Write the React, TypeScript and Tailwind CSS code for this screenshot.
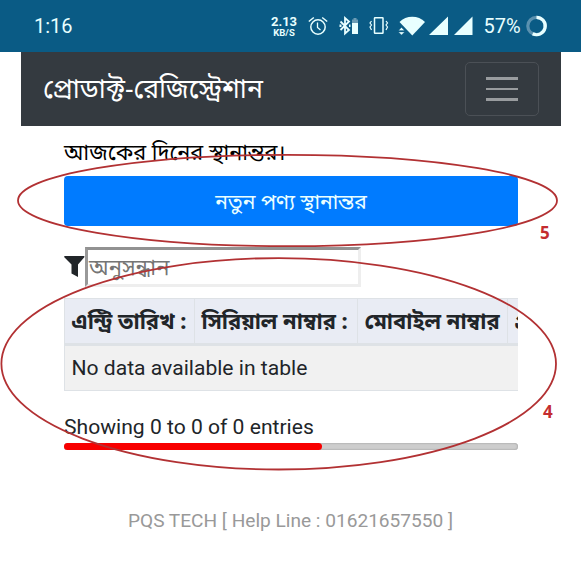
import React from "react";

const latin = "font-[Roboto,'Noto_Sans',sans-serif]";
const bangla = "font-['Noto_Sans_Bengali','Noto_Sans',Roboto,sans-serif]";

function StatusBar() {
  return (
    <header className="relative h-[52px] w-full shrink-0 bg-[#0a5b85] text-[#e8ffff]">
      <div className="flex h-full items-center pl-[34px]">
        <span className="w-[237px] text-[20px] leading-none">1:16</span>
        <div className="flex w-[26px] flex-col items-center font-bold leading-none">
          <span className="text-[13px] leading-[13px]">2.13</span>
          <span className="text-[9.5px] leading-[10px]">KB/S</span>
        </div>
        <svg width="284" height="52" viewBox="297 0 284 52" className="shrink-0" fill="none" stroke="#e8ffff">
          <circle cx="318" cy="27" r="7.2" strokeWidth="1.5" />
          <path d="M317.500 22.500v5l3 2.500" strokeWidth="1.300" />
          <path d="M308.800 21.500l5-4M327.200 21.500l-5-4" strokeWidth="1.500" />
          <path d="M340.500 21.500l8.500 8.500-4 3.500V18l4 3.500-8.500 8.500" strokeWidth="1.800" />
          <path d="M339.500 24.500h2v2.500h-2zM349 24.500h1.500v2.500H349z" fill="#e8ffff" stroke="none" />
          <path d="M352 19.500h1.500v-1.500h3v1.500h1.500V23h-6z" fill="#6b9cb5" stroke="none" />
          <path d="M352 23h6v11h-6z" fill="#e8ffff" stroke="none" />
          <rect x="374.500" y="17.700" width="8.500" height="15.600" rx=".5" strokeWidth="1.500" />
          <path d="M371.500 21l-1.500 2 1.500 2-1.500 2 1.500 3M386 21l1.500 2-1.500 2 1.500 2-1.500 3" strokeWidth="1.200" />
          <path d="M399.500 22C406 15 418.500 15 425 22L412.300 35.500z" fill="#e8ffff" stroke="none" />
          <path d="M398.500 30.500l3-3 3 3zM398.500 32l3 3 3-3z" fill="#e8ffff" stroke="#0a5b85" strokeWidth=".3" />
          <path d="M429 35L448 16.500V35zM454 35l18.500-18.500V35z" fill="#e8ffff" stroke="none" />
          <circle cx="536.500" cy="26" r="8.700" stroke="#5b91af" strokeWidth="3.200" />
          <path d="M536.500 17.300a8.700 8.700 0 1 1-3.800 16.500" strokeWidth="3.200" />
        </svg>
      </div>
      <span className="absolute left-[483.500px] top-[16px] text-[20px] leading-[20px]">57%</span>
    </header>
  );
}

function Navbar() {
  return (
    <nav className="mx-[21px] flex h-[74px] w-[540px] items-center justify-between bg-[#343a40] pl-[22px] pr-[22px]">
      <span className={`${bangla} whitespace-nowrap pt-[6px] text-[26.500px] leading-[36px] text-white`}>প্রোডাক্ট-রেজিস্ট্রেশান</span>
      <button className="flex h-[54px] w-[74px] flex-col items-center justify-center gap-2 rounded-[5px] border border-[#4b5056]" aria-label="Menu">
        <i className="h-[2.5px] w-8 bg-[#999c9f]" />
        <i className="h-[2.5px] w-8 bg-[#999c9f]" />
        <i className="h-[2.5px] w-8 bg-[#999c9f]" />
      </button>
    </nav>
  );
}

function Annotations() {
  return (
    <div className="pointer-events-none absolute inset-0 font-['Open_Sans',sans-serif] text-[17px] font-bold leading-5 text-[#c42d30]">
      <svg width="581" height="562" fill="none" stroke="#b23133" strokeWidth="1.800">
        <ellipse cx="287.500" cy="200.500" rx="269.500" ry="45.700" />
        <ellipse cx="278.700" cy="363.800" rx="277.300" ry="105.700" />
      </svg>
      <span className="absolute left-[540px] top-[223px]">5</span>
      <span className="absolute left-[543px] top-[402px]">4</span>
    </div>
  );
}

export default function App() {
  return (
    <div className={`relative h-[562px] w-[581px] overflow-hidden bg-white text-[#212529] ${latin}`}>
      <StatusBar />
      <Navbar />
      <main className="ml-16 w-[454px]">
        <div className={`${bangla} h-[50px] whitespace-nowrap pt-[14px] text-[21.700px] leading-[30px] text-black`}>আজকের দিনের স্থানান্তর।</div>
        <button className={`${bangla} flex h-[50px] w-full items-center justify-center rounded-[4px] bg-[#007bff] pt-[7px] text-[21.100px] text-[#eaffff]`}>নতুন পণ্য স্থানান্তর</button>
        <div className="mt-[21px] flex h-10">
          <svg width="21" height="40" viewBox="0 0 21 40" fill="#212529">
            <path d="M1 9h18.800q1.200 0 .5 1.200L14 17.500v12.500L7.500 26.500V17.500L.3 10.200Q-.3 9 1 9z" />
          </svg>
          <div className={`${bangla} flex h-10 w-[276px] items-center border-[3px] border-b-[#eee] border-l-[#999] border-r-[#eee] border-t-[#929292] pl-px pt-[6px] text-[22px] leading-none text-[#757575]`}>
            <span>অনুসন্ধান</span>
          </div>
        </div>
        <section className="mt-[11px] w-full overflow-hidden">
          <div className={`${bangla} grid h-[48px] w-[620px] grid-cols-[130px_163px_150px_177px] border-b-[3px] border-l border-t border-[#dee2e6] bg-[#e9ecf4] text-[21.900px] font-bold`}>
            {["এন্ট্রি তারিখ :", "সিরিয়াল নাম্বার :", "মোবাইল নাম্বার", "গ্রাহক"].map((label) => (
              <div key={label} className="flex items-center whitespace-nowrap border-r border-[#dee2e6] pl-[6.500px] pt-[6px]">{label}</div>
            ))}
          </div>
          <div className="flex h-[45px] w-[620px] items-center border-b border-l border-[#dee2e6] bg-[#f1f1f1] pl-[6.500px] text-[21.100px]">No data available in table</div>
        </section>
        <div className="mt-[24px] h-[28px] whitespace-nowrap text-[21.100px] leading-[24px]">Showing 0 to 0 of 0 entries</div>
        <div className="h-[7px] rounded-full bg-[#cdcdcd] shadow-[inset_0_0_2px_#888]">
          <div className="h-full w-[258px] rounded-full bg-[#f80000]" />
        </div>
      </main>
      <footer className="mt-[59px] text-center text-[19.100px] leading-6 text-[#999]">PQS TECH [ Help Line : 01621657550 ]</footer>
      <Annotations />
    </div>
  );
}
